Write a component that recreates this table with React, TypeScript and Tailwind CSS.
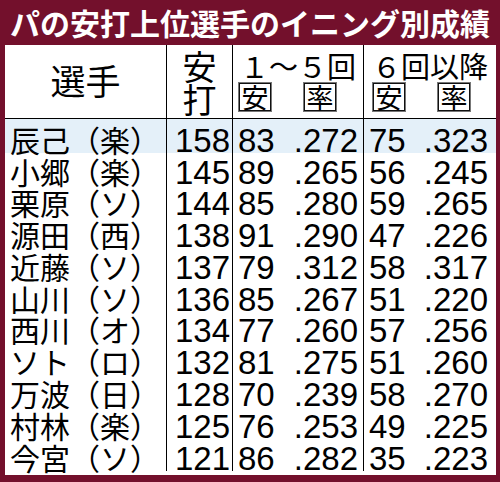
const rows = [
  { name: "辰己（楽）", hits: "158", h1: "83", r1: ".272", h2: "75", r2: ".323" },
  { name: "小郷（楽）", hits: "145", h1: "89", r1: ".265", h2: "56", r2: ".245" },
  { name: "栗原（ソ）", hits: "144", h1: "85", r1: ".280", h2: "59", r2: ".265" },
  { name: "源田（西）", hits: "138", h1: "91", r1: ".290", h2: "47", r2: ".226" },
  { name: "近藤（ソ）", hits: "137", h1: "79", r1: ".312", h2: "58", r2: ".317" },
  { name: "山川（ソ）", hits: "136", h1: "85", r1: ".267", h2: "51", r2: ".220" },
  { name: "西川（オ）", hits: "134", h1: "77", r1: ".260", h2: "57", r2: ".256" },
  { name: "ソト（ロ）", hits: "132", h1: "81", r1: ".275", h2: "51", r2: ".260" },
  { name: "万波（日）", hits: "128", h1: "70", r1: ".239", h2: "58", r2: ".270" },
  { name: "村林（楽）", hits: "125", h1: "76", r1: ".253", h2: "49", r2: ".225" },
  { name: "今宮（ソ）", hits: "121", h1: "86", r1: ".282", h2: "35", r2: ".223" },
];

const jp = "font-['Noto_Sans_CJK_JP',sans-serif]";
const num = "font-['Liberation_Sans','Noto_Sans_CJK_JP',sans-serif]";

function Box({ ch }: { ch: string }) {
  return (
    <span className="flex h-[30px] w-[34px] items-center justify-center border border-[#777] text-[27px] leading-[28px] shadow-[inset_-1px_-1px_0_#111,inset_1px_1px_0_#111]">
      {ch}
    </span>
  );
}

export default function App() {
  return (
    <div className={`flex h-[482px] w-[500px] flex-col bg-[#73102c] text-black ${jp}`}>
      <div className="h-[45px] pl-[10px] text-[30px] font-bold leading-[44px] text-white">
        パの安打上位選手のイニング別成績
      </div>

      <div className="ml-[5px] mr-[4px] flex h-[430px] flex-col bg-white">
        {/* header */}
        <div className="flex h-[74px] border-b border-black">
          <div className="flex w-[162px] items-center justify-center border-r border-black pb-[2px] text-[35px]">
            選手
          </div>
          <div className="flex w-[66px] flex-col items-center justify-center border-r border-black text-[34px] leading-[33px]">
            <span>安</span>
            <span>打</span>
          </div>
          <div className="flex w-[131px] flex-col border-r border-black pt-[4px]">
            <div className="text-center text-[29px] leading-[32px]">１～５回</div>
            <div className="mt-[1px] flex gap-[31px] pl-[5px]">
              <Box ch="安" />
              <Box ch="率" />
            </div>
          </div>
          <div className="flex flex-1 flex-col pt-[4px]">
            <div className="text-center text-[29px] leading-[32px]">６回以降</div>
            <div className="mt-[1px] flex gap-[31px] pl-[8px]">
              <Box ch="安" />
              <Box ch="率" />
            </div>
          </div>
        </div>

        {/* body */}
        <div className="flex flex-1 flex-col">
          {rows.map((r, i) => (
            <div
              key={r.name}
              className={`flex ${i === 0 ? "h-[34px] bg-[#e4f0f9]" : "h-[31.8px]"}`}
            >
              <div
                className={`w-[162px] border-r border-black pl-[5px] text-[30px] leading-[32px] ${num} ${
                  i === 0 ? "pt-[7px]" : "pt-[4.5px]"
                }`}
              >
                {r.name}
              </div>
              <div
                className={`w-[66px] border-r border-black pr-[2px] text-right text-[33px] leading-[32px] ${num} ${
                  i === 0 ? "pt-[6px]" : "pt-[3.5px]"
                }`}
              >
                {r.hits}
              </div>
              <div
                className={`flex w-[131px] justify-between border-r border-black pl-[5px] pr-[5px] text-[33px] leading-[32px] ${num} ${
                  i === 0 ? "pt-[6px]" : "pt-[3.5px]"
                }`}
              >
                <span>{r.h1}</span>
                <span>{r.r1}</span>
              </div>
              <div
                className={`flex flex-1 justify-between pl-[5px] pr-[8px] text-[33px] leading-[32px] ${num} ${
                  i === 0 ? "pt-[6px]" : "pt-[3.5px]"
                }`}
              >
                <span>{r.h2}</span>
                <span>{r.r2}</span>
              </div>
            </div>
          ))}
        </div>
      </div>
    </div>
  );
}
